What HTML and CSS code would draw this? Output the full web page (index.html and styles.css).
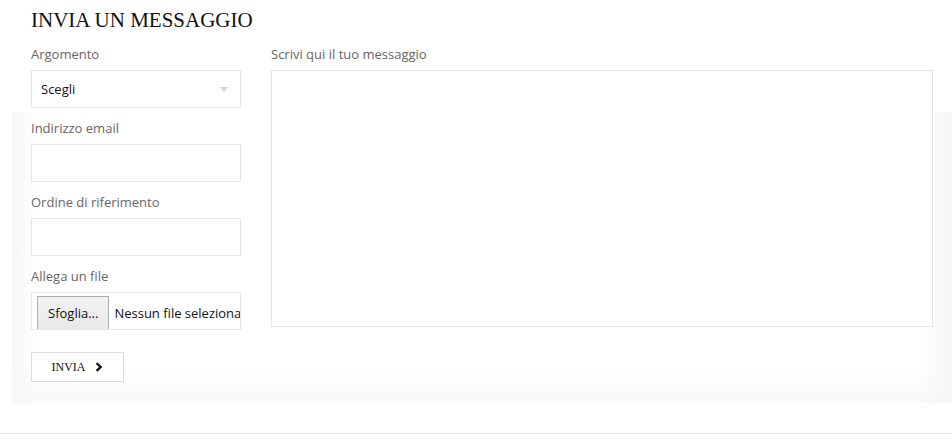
FILE: index.html
```html
<!DOCTYPE html>
<html lang="it">
<head>
<meta charset="utf-8">
<title>Invia un messaggio</title>
<link rel="stylesheet" href="styles.css">
</head>
<body>
<section class="panel">
  <h2 class="title">INVIA UN MESSAGGIO</h2>
  <form class="form">
    <div class="col-left">
      <label class="label">Argomento</label>
      <div class="select-wrap">
        <select class="select"><option>Scegli</option></select>
      </div>
      <label class="label">Indirizzo email</label>
      <input class="input" type="text">
      <label class="label">Ordine di riferimento</label>
      <input class="input" type="text">
      <label class="label">Allega un file</label>
      <div class="file">
        <span class="file-btn">Sfoglia...</span>
        <span class="file-name">Nessun file seleziona</span>
      </div>
      <button class="submit" type="button">INVIA
        <svg class="chev" width="8" height="10" viewBox="0 0 8 10"><polyline points="1.6,1.2 5.6,5 1.6,8.8" fill="none" stroke="#111" stroke-width="2.4"/></svg>
      </button>
    </div>
    <div class="col-right">
      <label class="label">Scrivi qui il tuo messaggio</label>
      <textarea class="textarea"></textarea>
    </div>
  </form>
</section>
<hr class="rule">
</body>
</html>
```
FILE: styles.css
```css
html, body {
  margin: 0;
  padding: 0;
  background: #fff;
}
body {
  font-family: "Open Sans", "Liberation Sans", sans-serif;
  width: 952px;
}
.panel {
  margin-left: 12px;
  padding: 7px 20px 21px 19px;
  background:
    linear-gradient(to right, #f7f7f7, rgba(255,255,255,0) 26px) 0 112px / 100% calc(100% - 112px) no-repeat,
    linear-gradient(to left, #f6f6f6, rgba(255,255,255,0) 34px) 0 112px / 100% calc(100% - 112px) no-repeat,
    linear-gradient(to top, #f9f9f9, rgba(255,255,255,0) 36px),
    #fff;
}
.title {
  margin: 0 0 1px;
  font-family: "Liberation Serif", "DejaVu Serif", serif;
  font-weight: normal;
  font-size: 21px;
  line-height: 26px;
  color: #111;
}
.form {
  display: grid;
  grid-template-columns: 210px 662px;
  column-gap: 30px;
}
.col-left, .col-right {
  display: flex;
  flex-direction: column;
}
.label {
  display: block;
  margin: 10px 0 6px;
  font-size: 13px;
  line-height: 20px;
  color: #666;
}
.select-wrap {
  position: relative;
  height: 38px;
}
.select-wrap::after {
  content: "";
  position: absolute;
  right: 13px;
  top: 17px;
  border-left: 4px solid transparent;
  border-right: 4px solid transparent;
  border-top: 5px solid #d4d4d4;
}
.select {
  appearance: none;
  -webkit-appearance: none;
  width: 100%;
  height: 38px;
  margin: 0;
  padding: 0 9px;
  border: 1px solid #e6e6e6;
  border-radius: 0;
  background: #fff;
  font-family: "Open Sans", "Liberation Sans", sans-serif;
  font-size: 13px;
  color: #111;
  outline: none;
}
.input {
  box-sizing: border-box;
  width: 100%;
  height: 38px;
  margin: 0;
  padding: 0 9px;
  border: 1px solid #e6e6e6;
  border-radius: 0;
  background: #fff;
  font-family: "Open Sans", "Liberation Sans", sans-serif;
  font-size: 13px;
  outline: none;
}
.file {
  box-sizing: border-box;
  height: 38px;
  border: 1px solid #e6e6e6;
  padding: 3px 0 0 5px;
  display: flex;
  align-items: flex-start;
  overflow: hidden;
  white-space: nowrap;
  font-size: 13px;
  color: #111;
}
.file-btn {
  box-sizing: border-box;
  flex: none;
  height: 40px;
  padding: 0 10px;
  line-height: 32px;
  border: 1px solid #adadad;
  background: linear-gradient(#f2f2f2, #e6e6e6);
  color: #111;
}
.file-name {
  padding-left: 5px;
  line-height: 34px;
}
.submit {
  box-sizing: border-box;
  align-self: flex-start;
  margin-top: 22px;
  width: 93px;
  height: 30px;
  padding: 0 1px 0 0;
  border: 1px solid #dcdcdc;
  background: #fff;
  display: flex;
  align-items: center;
  justify-content: center;
  gap: 9px;
  font-family: "Liberation Serif", "DejaVu Serif", serif;
  font-size: 12px;
  color: #111;
  cursor: pointer;
}
.chev {
  display: block;
}
.textarea {
  box-sizing: border-box;
  width: 662px;
  height: 257px;
  margin: 0;
  padding: 8px 10px;
  border: 1px solid #e6e6e6;
  border-radius: 0;
  resize: none;
  background: #fff;
  outline: none;
  font-family: "Open Sans", "Liberation Sans", sans-serif;
  font-size: 13px;
}
.rule {
  margin: 30px 0 0;
  border: 0;
  border-top: 1px solid #e8e8e8;
  height: 0;
}
```
